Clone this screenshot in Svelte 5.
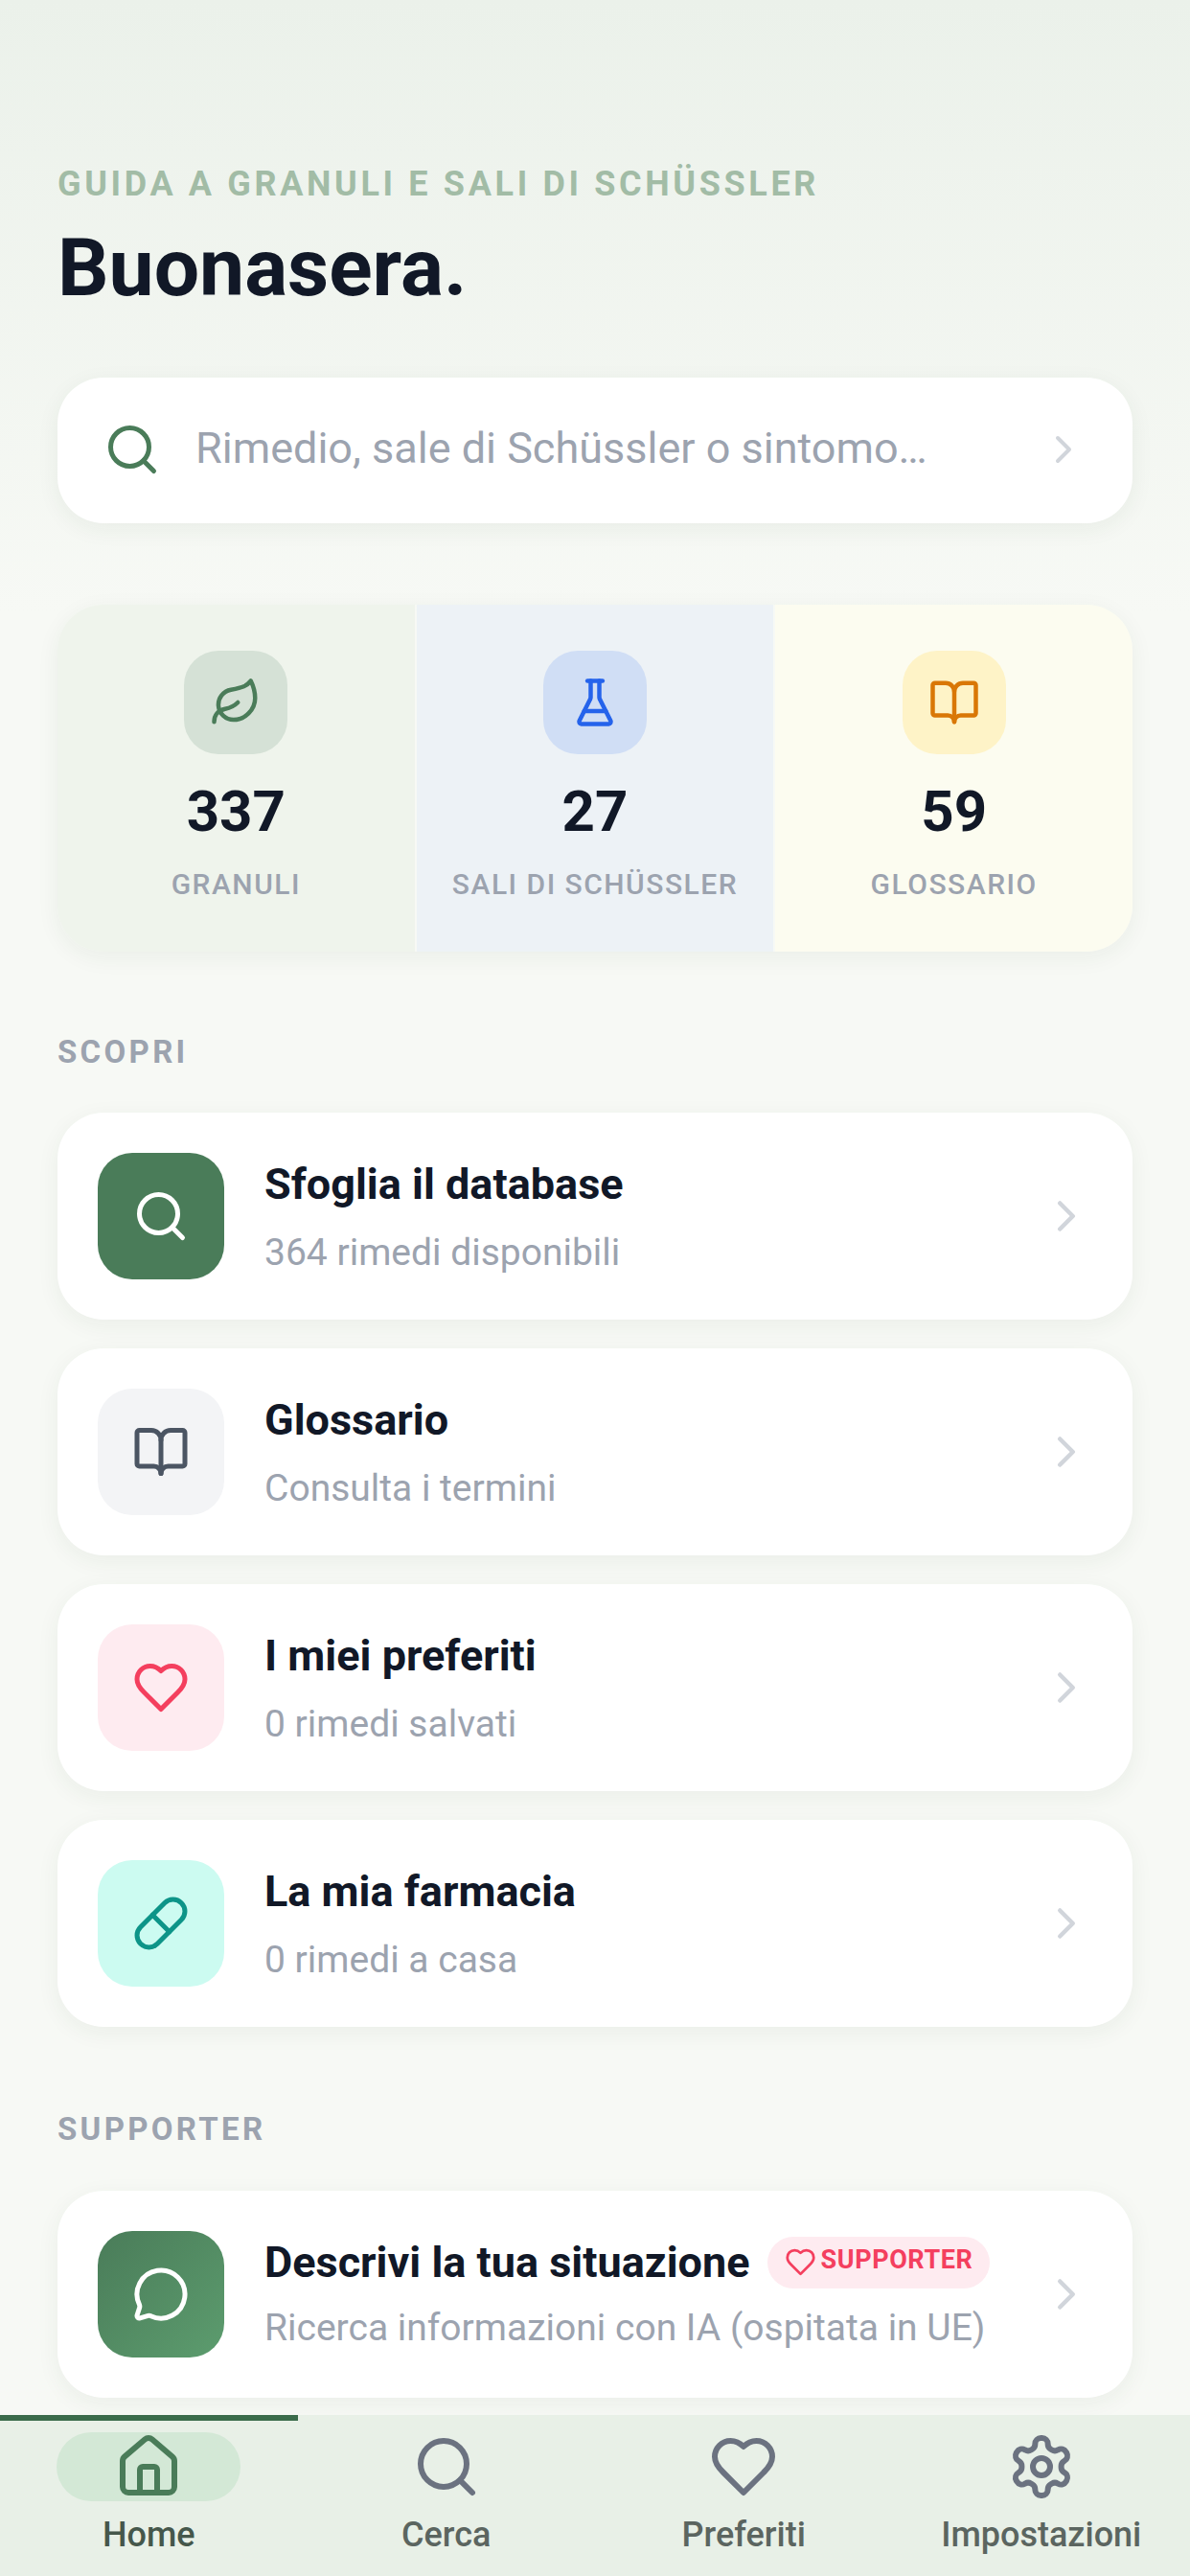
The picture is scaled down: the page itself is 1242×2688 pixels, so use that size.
<script>
	const stats = [
		{ value: '337', label: 'GRANULI', icon: 'leaf', tone: 'green' },
		{ value: '27', label: 'SALI DI SCHÜSSLER', icon: 'flask', tone: 'blue' },
		{ value: '59', label: 'GLOSSARIO', icon: 'book', tone: 'amber' }
	];

	const discover = [
		{ title: 'Sfoglia il database', sub: '364 rimedi disponibili', icon: 'search', tone: 'solid' },
		{ title: 'Glossario', sub: 'Consulta i termini', icon: 'book', tone: 'grey' },
		{ title: 'I miei preferiti', sub: '0 rimedi salvati', icon: 'heart', tone: 'pink' },
		{ title: 'La mia farmacia', sub: '0 rimedi a casa', icon: 'pill', tone: 'mint' }
	];

	const tabs = [
		{ label: 'Home', icon: 'house', active: true },
		{ label: 'Cerca', icon: 'search', active: false },
		{ label: 'Preferiti', icon: 'heart', active: false },
		{ label: 'Impostazioni', icon: 'settings', active: false }
	];
</script>

{#snippet icon(name, size, width = 2)}
	<svg
		xmlns="http://www.w3.org/2000/svg"
		width={size}
		height={size}
		viewBox="0 0 24 24"
		fill="none"
		stroke="currentColor"
		stroke-width={width}
		stroke-linecap="round"
		stroke-linejoin="round"
	>
		{#if name === 'search'}
			<circle cx="11" cy="11" r="8" />
			<path d="m21 21-4.3-4.3" />
		{:else if name === 'chevron'}
			<path d="m9 18 6-6-6-6" />
		{:else if name === 'leaf'}
			<path d="M11 20A7 7 0 0 1 9.8 6.1C15.5 5 17 4.48 19 2c1 2 2 4.18 2 8 0 5.5-4.78 10-10 10Z" />
			<path d="M2 21c0-3 1.85-5.36 5.08-6C9.5 14.52 12 13 13 12" />
		{:else if name === 'flask'}
			<path d="M10 2v7.527a2 2 0 0 1-.211.896L4.72 20.55a1 1 0 0 0 .9 1.45h12.76a1 1 0 0 0 .9-1.45l-5.069-10.127A2 2 0 0 1 14 9.527V2" />
			<path d="M8.5 2h7" />
			<path d="M7 16h10" />
		{:else if name === 'book'}
			<path d="M12 7v14" />
			<path d="M3 18a1 1 0 0 1-1-1V4a1 1 0 0 1 1-1h5a4 4 0 0 1 4 4 4 4 0 0 1 4-4h5a1 1 0 0 1 1 1v13a1 1 0 0 1-1 1h-6a3 3 0 0 0-3 3 3 3 0 0 0-3-3z" />
		{:else if name === 'heart'}
			<path d="M19 14c1.49-1.46 3-3.21 3-5.5A5.5 5.5 0 0 0 16.5 3c-1.76 0-3 .5-4.5 2-1.5-1.5-2.74-2-4.5-2A5.5 5.5 0 0 0 2 8.5c0 2.3 1.5 4.05 3 5.5l7 7Z" />
		{:else if name === 'pill'}
			<path d="m10.5 20.5 10-10a4.95 4.95 0 1 0-7-7l-10 10a4.95 4.95 0 1 0 7 7Z" />
			<path d="m8.5 8.5 7 7" />
		{:else if name === 'message'}
			<path d="M2.992 16.342a2 2 0 0 1 .094 1.167l-1.065 3.29a1 1 0 0 0 1.236 1.168l3.413-.998a2 2 0 0 1 1.099.092 10 10 0 1 0-4.777-4.719" />
		{:else if name === 'house'}
			<path d="M15 21v-8a1 1 0 0 0-1-1h-4a1 1 0 0 0-1 1v8" />
			<path d="M3 10a2 2 0 0 1 .709-1.528l7-5.999a2 2 0 0 1 2.582 0l7 5.999A2 2 0 0 1 21 10v9a2 2 0 0 1-2 2H5a2 2 0 0 1-2-2z" />
		{:else if name === 'settings'}
			<path d="M12.22 2h-.44a2 2 0 0 0-2 2v.18a2 2 0 0 1-1 1.73l-.43.25a2 2 0 0 1-2 0l-.15-.08a2 2 0 0 0-2.73.73l-.22.38a2 2 0 0 0 .73 2.73l.15.1a2 2 0 0 1 1 1.72v.51a2 2 0 0 1-1 1.74l-.15.09a2 2 0 0 0-.73 2.73l.22.38a2 2 0 0 0 2.73.73l.15-.08a2 2 0 0 1 2 0l.43.25a2 2 0 0 1 1 1.73V20a2 2 0 0 0 2 2h.44a2 2 0 0 0 2-2v-.18a2 2 0 0 1 1-1.73l.43-.25a2 2 0 0 1 2 0l.15.08a2 2 0 0 0 2.73-.73l.22-.39a2 2 0 0 0-.73-2.73l-.15-.08a2 2 0 0 1-1-1.74v-.5a2 2 0 0 1 1-1.74l.15-.09a2 2 0 0 0 .73-2.73l-.22-.38a2 2 0 0 0-2.73-.73l-.15.08a2 2 0 0 1-2 0l-.43-.25a2 2 0 0 1-1-1.73V4a2 2 0 0 0-2-2z" />
			<circle cx="12" cy="12" r="3" />
		{/if}
	</svg>
{/snippet}

<div class="screen">
	<main class="content">
		<header class="hero">
			<p class="eyebrow">GUIDA A GRANULI E SALI DI SCHÜSSLER</p>
			<h1>Buonasera.</h1>
		</header>

		<div class="search">
			<span class="search-icon">{@render icon('search', 60)}</span>
			<span class="placeholder">Rimedio, sale di Schüssler o sintomo…</span>
			<span class="search-chevron">{@render icon('chevron', 48)}</span>
		</div>

		<section class="stats">
			{#each stats as stat}
				<div class="stat {stat.tone}">
					<div class="stat-icon">{@render icon(stat.icon, 54)}</div>
					<div class="stat-value">{stat.value}</div>
					<div class="stat-label">{stat.label}</div>
				</div>
			{/each}
		</section>

		<h2 class="section-title">SCOPRI</h2>
		<div class="list">
			{#each discover as item}
				<div class="card">
					<div class="card-icon {item.tone}">{@render icon(item.icon, 60)}</div>
					<div class="card-text">
						<div class="card-title">{item.title}</div>
						<div class="card-sub">{item.sub}</div>
					</div>
					<span class="card-chevron">{@render icon('chevron', 54)}</span>
				</div>
			{/each}
		</div>

		<h2 class="section-title supporter-title">SUPPORTER</h2>
		<div class="card">
			<div class="card-icon gradient">{@render icon('message', 60)}</div>
			<div class="card-text tight">
				<div class="card-title">
					Descrivi la tua situazione
					<span class="badge">{@render icon('heart', 33)}<span class="badge-text">SUPPORTER</span></span>
				</div>
				<div class="card-sub">Ricerca informazioni con IA (ospitata in UE)</div>
			</div>
			<span class="card-chevron">{@render icon('chevron', 54)}</span>
		</div>
	</main>

	<nav class="tabbar">
		{#each tabs as tab}
			<div class="tab" class:active={tab.active}>
				<div class="tab-icon">{@render icon(tab.icon, 72)}</div>
				<div class="tab-label">{tab.label}</div>
			</div>
		{/each}
	</nav>
</div>

<style>
	:global(body) {
		margin: 0;
		font-family: Roboto, 'Liberation Sans', sans-serif;
	}

	.screen {
		display: flex;
		flex-direction: column;
		width: 1242px;
		height: 2688px;
		overflow: hidden;
		background: linear-gradient(180deg, #ebf1ea 0, #f7f9f5 640px, #f7f9f5 100%);
	}

	.content {
		flex: 1;
		min-height: 0;
		overflow: hidden;
		padding: 0 60px;
	}

	.hero {
		padding-top: 170px;
	}

	.eyebrow {
		margin: 0;
		font-size: 36px;
		line-height: 44px;
		font-weight: 700;
		letter-spacing: 3.65px;
		color: #a2bca6;
	}

	h1 {
		margin: 16px 0 0;
		font-size: 84px;
		line-height: 100px;
		font-weight: 700;
		color: #111827;
	}

	.search {
		display: flex;
		align-items: center;
		box-sizing: border-box;
		height: 152px;
		margin-top: 64px;
		padding: 0 48px 3px;
		background: #fff;
		border-radius: 48px;
		box-shadow: 0 6px 24px rgba(30, 60, 40, 0.06);
	}

	.search-icon {
		display: flex;
		color: #4a7c59;
	}

	.placeholder {
		flex: 1;
		margin-left: 36px;
		padding-bottom: 3px;
		font-size: 45px;
		color: #9ca3af;
	}

	.search-chevron {
		display: flex;
		color: #d1d5db;
	}

	.stats {
		display: grid;
		grid-template-columns: repeat(3, 1fr);
		gap: 2px;
		height: 362px;
		margin-top: 85px;
		border-radius: 48px;
		overflow: hidden;
		box-shadow: 0 6px 24px rgba(30, 60, 40, 0.06);
	}

	.stat {
		display: flex;
		flex-direction: column;
		align-items: center;
		padding-top: 48px;
	}

	.stat-icon {
		display: flex;
		align-items: center;
		justify-content: center;
		width: 108px;
		height: 108px;
		border-radius: 36px;
	}

	.stat-value {
		margin-top: 24px;
		font-size: 60px;
		line-height: 72px;
		font-weight: 700;
		color: #111827;
	}

	.stat-label {
		margin-top: 22px;
		font-size: 30px;
		line-height: 36px;
		font-weight: 500;
		letter-spacing: 1.5px;
		color: #9ca3af;
		white-space: nowrap;
	}

	.stat.green { background: #eff4ec; }
	.stat.green .stat-icon { background: #d5e1d6; color: #4a7c59; }
	.stat.blue { background: #edf2f6; }
	.stat.blue .stat-icon { background: #d0def5; color: #2563eb; }
	.stat.amber { background: #fcfcf0; }
	.stat.amber .stat-icon { background: #fef3c7; color: #d97706; }

	.section-title {
		margin: 87px 0 0;
		font-size: 33px;
		line-height: 36px;
		font-weight: 700;
		letter-spacing: 3.3px;
		color: #9ca3af;
	}

	.supporter-title {
		margin-top: 89px;
	}

	.list {
		display: flex;
		flex-direction: column;
		gap: 30px;
		margin-top: 45px;
	}

	.supporter-title + .card {
		margin-top: 46px;
	}

	.card {
		display: flex;
		align-items: center;
		height: 216px;
		box-sizing: border-box;
		padding: 0 42px;
		background: #fff;
		border-radius: 48px;
		box-shadow: 0 6px 24px rgba(30, 60, 40, 0.06);
	}

	.card-icon {
		display: flex;
		flex: none;
		align-items: center;
		justify-content: center;
		width: 132px;
		height: 132px;
		border-radius: 36px;
	}

	.card-icon.solid { background: #4a7c59; color: #fff; }
	.card-icon.grey { background: #f3f4f6; color: #4b5563; }
	.card-icon.pink { background: #feebf0; color: #f43f5e; }
	.card-icon.mint { background: #ccfbf1; color: #0d9488; }
	.card-icon.gradient { background: linear-gradient(135deg, #4a7c59, #5c9c6e); color: #fff; }

	.card-text {
		flex: 1;
		min-width: 0;
		margin-left: 42px;
	}

	.card-title {
		display: flex;
		align-items: center;
		gap: 18px;
		font-size: 45px;
		line-height: 56px;
		font-weight: 700;
		color: #111827;
	}

	.card-sub {
		margin-top: 19px;
		font-size: 39px;
		line-height: 48px;
		color: #9ca3af;
	}

	.card-text.tight {
		padding-bottom: 3px;
	}

	.card-text.tight .card-sub {
		margin-top: 16px;
	}

	.card-chevron {
		display: flex;
		color: #d1d5db;
	}

	.badge {
		display: inline-flex;
		align-items: center;
		gap: 5px;
		height: 54px;
		padding: 0 18px;
		border-radius: 27px;
		background: #feebf0;
		color: #f43f5e;
		font-size: 27px;
		font-weight: 700;
		letter-spacing: 0.6px;
	}

	.badge-text {
		margin-bottom: 5px;
	}

	.tabbar {
		position: relative;
		display: grid;
		grid-template-columns: repeat(4, 1fr);
		flex: none;
		height: 168px;
		background: #e8f0e7;
	}

	.tab {
		display: flex;
		flex-direction: column;
		align-items: center;
		position: relative;
		padding-top: 18px;
		color: #6b7280;
	}

	.tab.active {
		color: #4a7c59;
	}

	.tab.active::before {
		content: '';
		position: absolute;
		top: 0;
		left: 0;
		right: 0;
		height: 6px;
		background: #3a6b4a;
	}

	.tab-icon {
		display: flex;
		align-items: center;
		justify-content: center;
		width: 192px;
		height: 72px;
		border-radius: 36px;
	}

	.tab.active .tab-icon {
		background: #d3e8d6;
	}

	.tab-label {
		margin-top: 13px;
		font-size: 36px;
		line-height: 44px;
		font-weight: 500;
		color: #5b6560;
		white-space: nowrap;
	}

	.tab.active .tab-label {
		color: #45574b;
	}
</style>
